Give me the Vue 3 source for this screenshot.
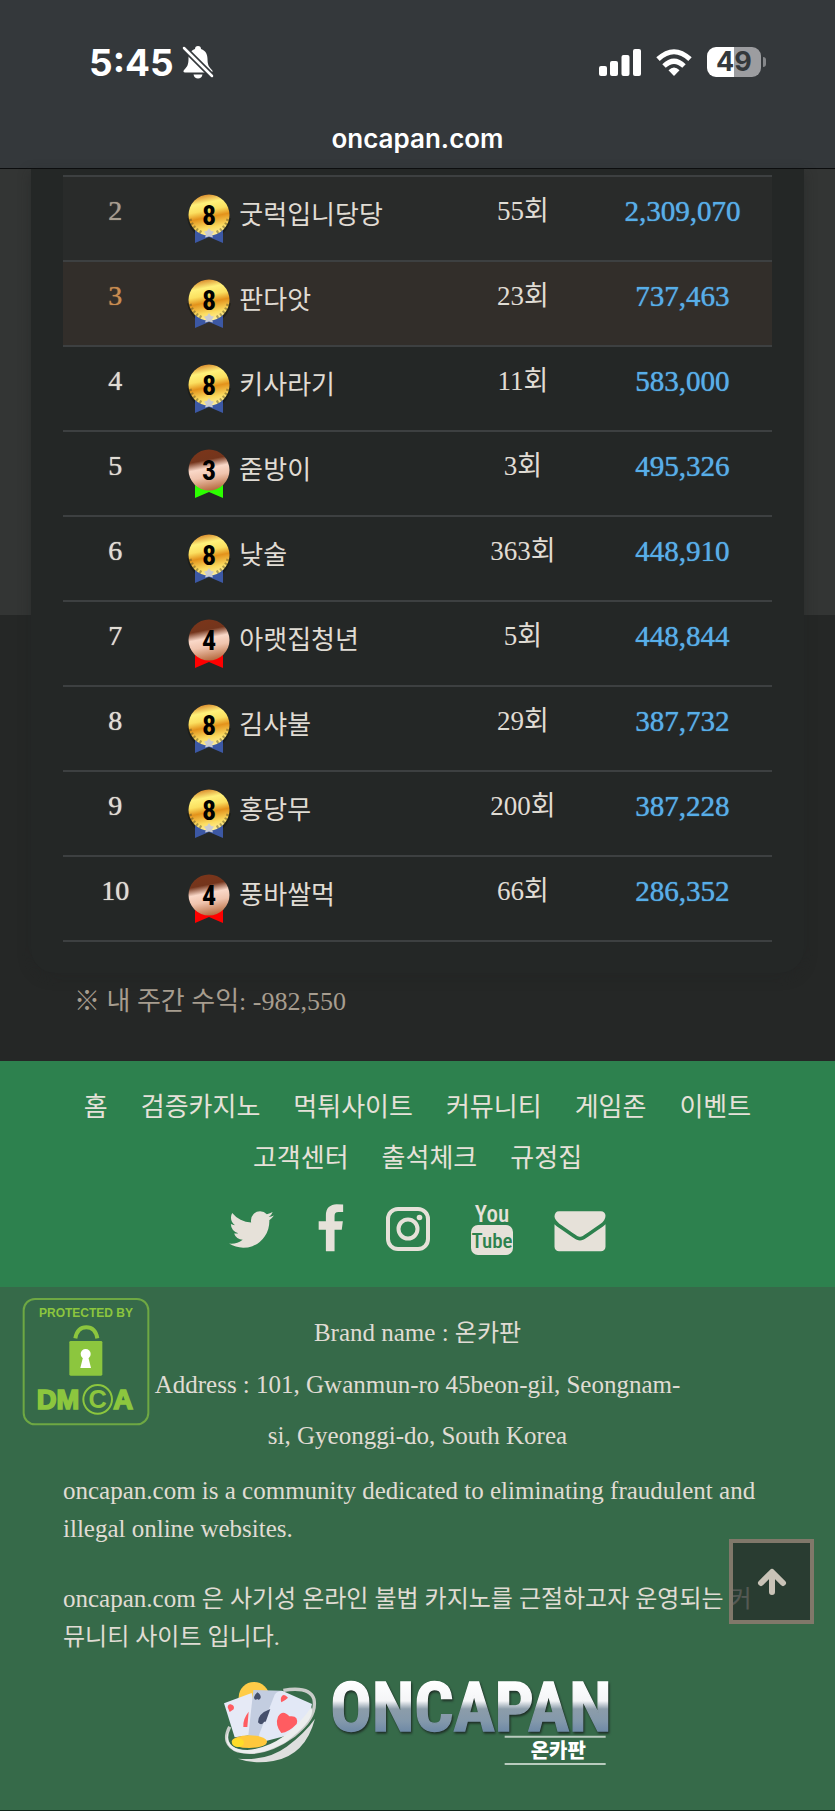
<script setup>
const rows = [
  { rank: 2, level: 8, name: '굿럭입니당당', count: '55회', amount: '2,309,070' },
  { rank: 3, level: 8, name: '판다앗', count: '23회', amount: '737,463' },
  { rank: 4, level: 8, name: '키사라기', count: '11회', amount: '583,000' },
  { rank: 5, level: 3, name: '줃방이', count: '3회', amount: '495,326' },
  { rank: 6, level: 8, name: '낮술', count: '363회', amount: '448,910' },
  { rank: 7, level: 4, name: '아랫집청년', count: '5회', amount: '448,844' },
  { rank: 8, level: 8, name: '김샤불', count: '29회', amount: '387,732' },
  { rank: 9, level: 8, name: '홍당무', count: '200회', amount: '387,228' },
  { rank: 10, level: 4, name: '풍바쌀먹', count: '66회', amount: '286,352' },
]
const ribbon = { 8: '#3c58a4', 3: '#2cff00', 4: '#ff0000' }
const links = ['홈', '검증카지노', '먹튀사이트', '커뮤니티', '게임존', '이벤트', '고객센터', '출석체크', '규정집']
</script>

<template>
  <div class="page">
    <svg class="defs" width="0" height="0" aria-hidden="true">
      <defs>
        <linearGradient id="gold" x1="0.4" y1="0" x2="0.6" y2="1">
          <stop offset="0" stop-color="#d98a2c" />
          <stop offset="0.2" stop-color="#fff17a" />
          <stop offset="0.38" stop-color="#fbe060" />
          <stop offset="0.55" stop-color="#e3921b" />
          <stop offset="0.8" stop-color="#fbdc60" />
          <stop offset="1" stop-color="#fff0a0" />
        </linearGradient>
        <linearGradient id="bronze" x1="0.4" y1="0" x2="0.6" y2="1">
          <stop offset="0" stop-color="#7a351a" />
          <stop offset="0.25" stop-color="#74351c" />
          <stop offset="0.45" stop-color="#fad8c8" />
          <stop offset="0.65" stop-color="#f0c4ae" />
          <stop offset="1" stop-color="#b4683c" />
        </linearGradient>
      </defs>
    </svg>

    <header class="top">
      <div class="status">
        <div class="clock">
          <span>5:45</span>
          <svg width="32" height="34" viewBox="0 0 32 34" aria-label="무음">
            <path d="M16 1c-2 0-3 1.300-3 3-5 1.600-6.500 6-6.500 10 0 6-1.500 8-4.500 11-1 1.200-.6 2.500 1 2.500h26c1.600 0 2-1.300 1-2.500-3-3-4.500-5-4.500-11 0-4-1.500-8.400-6.500-10 0-1.700-1-3-3-3z" fill="#fff" />
            <path d="M11.500 29.500h9c-.4 2.500-2.200 4-4.500 4s-4.100-1.500-4.500-4z" fill="#fff" />
            <path d="M1 2L32 33" stroke="#34383b" stroke-width="6" />
            <path d="M2 3L30 31" stroke="#fff" stroke-width="2.500" stroke-linecap="round" />
          </svg>
        </div>
        <div class="signals">
          <svg width="42" height="27" viewBox="0 0 42 27" fill="#fff" aria-label="신호">
            <rect x="0" y="17" width="8" height="10" rx="2" />
            <rect x="11" y="12" width="8" height="15" rx="2" />
            <rect x="22.500" y="6" width="8" height="21" rx="2" />
            <rect x="34" y="0" width="8" height="27" rx="2" />
          </svg>
          <svg width="36" height="27" viewBox="0 0 36 27" fill="none" stroke="#fff" stroke-width="5" aria-label="Wi-Fi">
            <path d="M2 10.200Q18-4.700 34 10.200" />
            <path d="M8 17Q18 7.500 28 17" />
            <path d="M18 27L12.500 21.200Q18 16 23.500 21.200Z" fill="#fff" stroke="none" />
          </svg>
          <div class="battery"><span>49</span></div>
        </div>
      </div>
      <div class="url">oncapan.com</div>
    </header>

    <main>
      <section class="card">
        <table>
          <tbody>
            <tr v-for="r in rows" :key="r.rank" :class="'rank-' + r.rank">
              <td class="rank">{{ r.rank }}</td>
              <td class="name">
                <div class="user">
                  <svg class="medal" width="46" height="50" viewBox="0 0 46 50" aria-hidden="true">
                    <path v-if="r.level === 8" d="M3 24Q5 35 14 41M43 24Q41 35 32 41" fill="none" stroke="#12130d" stroke-width="4" opacity="0.5" />
                    <path d="M9 32h28v17l-14-6-14 6z" :fill="ribbon[r.level]" />
                    <circle cx="23" cy="21" r="20.500" :fill="r.level === 8 ? 'url(#gold)' : 'url(#bronze)'" />
                    <g v-if="r.level === 8">
                      <path d="M4 25Q7 35 17 39M42 25Q39 35 29 39" fill="none" stroke="#5c5226" stroke-width="3" stroke-dasharray="2 2" opacity="0.5" />
                      <path d="M23 34l2 3 3 .5-2 3 1 3-4-1-4 1 1-3-2-3 3-.5z" fill="#c9cbd3" />
                    </g>
                    <text x="23" y="31" text-anchor="middle" class="digit">{{ r.level }}</text>
                  </svg>
                  <span>{{ r.name }}</span>
                </div>
              </td>
              <td class="count">{{ r.count }}</td>
              <td class="amount">{{ r.amount }}</td>
            </tr>
          </tbody>
        </table>
      </section>
      <p class="note">※ 내 주간 수익: -982,550</p>
    </main>

    <footer>
      <div class="menu">
        <nav>
          <a v-for="l in links" :key="l" href="#">{{ l }}</a>
        </nav>
        <div class="social">
          <a href="#" aria-label="Twitter">
            <svg width="51" height="51" viewBox="0 0 1792 1792"><path d="M1684 408q-67 98-162 167 1 14 1 42 0 130-38 259.500t-115.500 248.500-184.500 210.500-258 146-323 54.500q-271 0-496-145 35 4 78 4 225 0 401-138-105-2-188-64.500t-114-159.500q33 5 61 5 43 0 85-11-112-23-185.500-111.500t-73.500-205.500v-4q68 38 146 41-66-44-105-115t-39-154q0-88 44-163 121 149 294.500 238.500t371.500 99.500q-8-38-8-74 0-134 94.500-228.500t228.500-94.500q140 0 236 102 109-21 205-78-37 115-142 178 93-10 186-50z" /></svg>
          </a>
          <a href="#" aria-label="Facebook">
            <svg width="29" height="51" viewBox="420 0 1024 1792"><path d="M1343 12v264h-157q-86 0-116 36t-30 108v189h293l-39 296h-254v759h-306v-759h-255v-296h255v-218q0-186 104-288.500t277-102.500q147 0 228 12z" /></svg>
          </a>
          <a href="#" aria-label="Instagram">
            <svg width="44" height="51" viewBox="0 0 44 51">
              <rect x="2" y="5" width="40" height="40" rx="10" fill="none" stroke="#e6e1d9" stroke-width="4" />
              <circle cx="22" cy="25" r="9.500" fill="none" stroke="#e6e1d9" stroke-width="4" />
              <circle cx="33.500" cy="13.500" r="2.800" />
            </svg>
          </a>
          <a href="#" aria-label="YouTube">
            <svg class="youtube" width="44" height="52" viewBox="0 0 44 52">
              <text x="22" y="18" text-anchor="middle" class="you">You</text>
              <rect x="1" y="21" width="42" height="30" rx="7" />
              <text x="22" y="44" text-anchor="middle" class="tube">Tube</text>
            </svg>
          </a>
          <a href="#" aria-label="Email">
            <svg width="52" height="51" viewBox="0 0 1792 1792"><path d="M1792 710v794q0 66-47 113t-113 47h-1472q-66 0-113-47t-47-113v-794q44 49 101 87 362 246 497 345 57 42 92.500 65.500t94.500 48 110 24.500h2q51 0 110-24.500t94.500-48 92.500-65.500q170-123 498-345 57-39 100-87zm0-294q0 79-49 151t-122 123q-376 261-468 325-10 7-42.500 31t-54 38.500-52 32.500-57.500 27-50 9h-2q-23 0-50-9t-57.500-27-52-32.500-54-38.500-42.500-31q-91-64-262-182.500t-205-142.500q-62-42-117-115.500t-55-136.500q0-78 41.500-130t118.500-52h1472q65 0 112.500 47t47.500 113z" /></svg>
          </a>
        </div>
      </div>

      <div class="info">
        <a class="dmca" href="#" aria-label="DMCA">
          <svg width="128" height="130" viewBox="0 0 384 390" fill="#8cc63e">
            <rect x="5" y="6" width="374" height="376" rx="34" fill="none" stroke="#6ea843" stroke-width="6" />
            <text x="192" y="61" text-anchor="middle" class="protected">PROTECTED BY</text>
            <path d="M160 124Q166 91 193 91T226 124" fill="none" stroke="#8cc63e" stroke-width="12" />
            <rect x="142" y="132" width="99" height="104" rx="4" />
            <circle cx="191" cy="171" r="15" fill="#fff" />
            <path d="M185 173h12l10 40h-32z" fill="#fff" />
            <text x="44" y="337" class="dm">DM</text>
            <text x="274" y="337" class="dm">A</text>
            <circle cx="227" cy="307" r="43" fill="#366a49" stroke="#8cc63e" stroke-width="6" />
            <text x="227" y="334" text-anchor="middle" class="cc">C</text>
          </svg>
        </a>
        <div class="address">
          <p>Brand name : <span class="ko">온카판</span></p>
          <p>Address : 101, Gwanmun-ro 45beon-gil, Seongnam-si, Gyeonggi-do, South Korea</p>
        </div>
        <p class="about">oncapan.com is a community dedicated to eliminating fraudulent and illegal online websites.</p>
        <p class="about korean">oncapan.com <span class="ko">은 사기성 온라인 불법 카지노를 근절하고자 운영되는 커뮤니티 사이트 입니다.</span></p>
        <a class="logo" href="#" aria-label="ONCAPAN 온카판">
          <svg width="430" height="110" viewBox="9 0 1290 330">
            <defs>
              <linearGradient id="chrome" gradientUnits="userSpaceOnUse" x1="0" y1="62" x2="0" y2="214">
                <stop offset="0" stop-color="#ffffff" />
                <stop offset="0.4" stop-color="#f4f5f7" />
                <stop offset="0.56" stop-color="#8c9daa" />
                <stop offset="0.8" stop-color="#8398ab" />
                <stop offset="1" stop-color="#6f8aa6" />
              </linearGradient>
            </defs>
            <circle cx="162" cy="112" r="46" fill="#ffcc48" />
            <path d="M250 91Q330 78 342 118Q352 172 282 226Q190 292 114 273Q62 252 89 200" fill="none" stroke="#c9ccc9" stroke-width="10" />
            <path d="M72 130L155 99L180 222L104 232Z" fill="#e6eaf6" />
            <path d="M160 90L246 92L206 236L144 236Z" fill="#c3cde0" />
            <path d="M224 104Q232 92 248 93L336 132Q325 188 270 224L172 250L178 222Z" fill="#e2e8f6" />
            <path d="M92 133q13 3 9 15l-12 8-6-14q1-10 9-9zM146 155l-4 46h-12q-2-24 16-46z" fill="#ff5c61" />
            <path d="M172 97q12 8 10 17-5 9-10 3-8 6-10-4 1-8 10-16zM211 147q-38 14-37 40 10 12 18-1l6-2-4 10z" fill="#46506c" />
            <path d="M246 108q7-8 18 5-8 8-20 14-4-12 2-19zM234 170q14-23 34-1 29-4 22 23-24 25-46 27-20-25-10-49z" fill="#ff5c61" />
            <path d="M86 212Q72 270 142 270Q250 262 334 142Q350 178 258 246Q168 298 103 272Q66 250 86 212Z" fill="#eceeee" />
            <ellipse cx="148" cy="245" rx="53" ry="19" fill="#ffc83c" />
            <ellipse cx="114" cy="248" rx="18" ry="13" fill="#ffdc28" />
            <path d="M345 176Q316 286 220 303Q160 313 114 296Q200 304 260 260Q314 220 345 176Z" fill="#dedfde" />
            <text x="391" y="212" class="word" fill="url(#chrome)" stroke="url(#chrome)">ONCAPAN</text>
            <path d="M914 230H1217M914 312H1217" stroke="#b9cbbe" stroke-width="6" />
            <text x="1075" y="293" text-anchor="middle" class="sub">온카판</text>
          </svg>
        </a>
        <button class="to-top" type="button" aria-label="맨 위로">
          <svg width="30" height="28" viewBox="0 0 30 28" fill="none" stroke="#c9c3b7" stroke-width="6" stroke-linecap="round" stroke-linejoin="round">
            <path d="M15 24V5M4 15L15 4L26 15" />
          </svg>
        </button>
      </div>
    </footer>
  </div>
</template>

<style>
body {
  margin: 0;
  background: #242726;
}
</style>

<style scoped>
.page {
  font-family: "Liberation Serif", "Noto Sans CJK KR", serif;
  font-size: 26px;
  font-weight: 400;
  color: #e0dcd4;
  border-bottom: 2px solid #12281b;
}
.defs {
  position: absolute;
}
p {
  margin: 0;
}
a {
  color: inherit;
  text-decoration: none;
}
svg {
  display: block;
  flex: none;
}
.top {
  background: #34383b;
  border-bottom: 1px solid #0c0d0e;
  padding-bottom: 11px;
  font-family: Inter, sans-serif;
  color: #fff;
}
.status {
  display: flex;
  justify-content: space-between;
  align-items: center;
  padding: 40px 74px 0 89px;
  height: 44px;
}
.clock,
.signals {
  display: flex;
  align-items: center;
}
.clock {
  font-size: 37px;
  font-weight: 700;
  gap: 8px;
}
.signals {
  gap: 15px;
}
.battery {
  position: relative;
  width: 54px;
  height: 30px;
  border-radius: 9px;
  background: linear-gradient(90deg, #fff 50%, #9c9da0 50%);
  color: #34383b;
  font-size: 27px;
  font-weight: 700;
  line-height: 30px;
  text-align: center;
}
.battery::after {
  content: "";
  position: absolute;
  left: 56px;
  top: 10px;
  width: 3px;
  height: 10px;
  border-radius: 0 3px 3px 0;
  background: #85878a;
}
.url {
  margin-top: 37px;
  font-size: 26px;
  font-weight: 600;
  line-height: 36px;
  text-align: center;
}
main {
  display: flow-root;
  background: linear-gradient(#333534 446px, #252726 446px);
  padding: 0 31px 40px;
}
.card {
  background: #242726;
  border-radius: 0 0 24px 24px;
  padding: 6px 32px 31px;
  box-shadow: 0 4px 12px rgba(34, 36, 35, 0.5);
}
table {
  width: 100%;
  table-layout: fixed;
  border-spacing: 0;
  border-top: 2px solid #3d4041;
}
td {
  box-sizing: border-box;
  height: 85px;
  padding: 17px 2px 0 0;
  border-bottom: 2px solid #3d4041;
  line-height: 34px;
  text-align: center;
  vertical-align: top;
}
.rank {
  width: 15%;
  font-size: 28px;
  text-shadow: 0 0 1px currentColor;
}
.rank-2 td {
  background: #292b2a;
}
.rank-3 td {
  background: #322e2a;
}
.rank-2 .rank {
  color: #a89e90;
}
.rank-3 .rank {
  color: #c98c50;
}
.name {
  padding-left: 17px;
}
.count {
  width: 20%;
  font-size: 27px;
}
.amount {
  width: 25%;
  font-size: 29px;
  color: #57aee8;
  text-shadow: 0 0 1px currentColor;
}
.user {
  display: flex;
  align-items: flex-start;
  gap: 7px;
  line-height: 44px;
}
.digit {
  font: 700 28px "Roboto Condensed", Roboto, sans-serif;
  fill: #000;
}
.note {
  margin-top: 10px;
  padding-left: 43px;
  line-height: 38px;
  color: #a79d8f;
}
.menu {
  background: #2d814e;
  padding: 21px 63px 29px;
  color: #e6e1d9;
}
nav {
  display: flex;
  flex-wrap: wrap;
  justify-content: center;
  column-gap: 33px;
  line-height: 51px;
}
.social {
  display: flex;
  justify-content: center;
  gap: 40px;
  height: 54px;
  margin: 20px 4px 0 0;
  fill: #e6e1d9;
}
.youtube {
  overflow: visible;
}
.you,
.tube {
  font-family: "Roboto Condensed", "Liberation Sans Narrow", Roboto, sans-serif;
  font-weight: 500;
}
.you {
  font-size: 23px;
}
.tube {
  font-size: 21px;
  fill: #2d814e;
}
.info {
  position: relative;
  background: #366a49;
  padding: 20px 63px 40px;
  font-size: 25px;
}
.ko {
  font-size: 24px;
}
.address {
  padding: 0 85px;
  line-height: 51px;
  text-align: center;
}
.about {
  margin-top: 11px;
  line-height: 38px;
}
.about.korean {
  margin-top: 32px;
  word-break: break-all;
}
.dmca {
  position: absolute;
  left: 22px;
  top: 10px;
}
.protected {
  font: 700 36px "Liberation Sans", sans-serif;
}
.dm {
  font: 700 82px "Liberation Sans", sans-serif;
  stroke: #8cc63e;
  stroke-width: 5px;
}
.cc {
  font: 700 76px "Liberation Sans", sans-serif;
}
.logo {
  display: flex;
  justify-content: center;
  margin-top: 4px;
}
.word {
  font-family: "Liberation Sans Narrow", "Roboto Condensed", "Liberation Sans", sans-serif;
  font-size: 207px;
  font-weight: 700;
  stroke-width: 4px;
  filter: drop-shadow(3px 5px 3px #1c2a23);
}
.sub {
  font: 900 60px "Noto Sans CJK KR", sans-serif;
  fill: #fff;
}
.to-top {
  position: absolute;
  right: 21px;
  top: 252px;
  display: flex;
  align-items: center;
  justify-content: center;
  width: 85px;
  height: 85px;
  padding: 0;
  border: 4px solid #80786a;
  background: rgba(37, 45, 41, 0.75);
}
</style>
